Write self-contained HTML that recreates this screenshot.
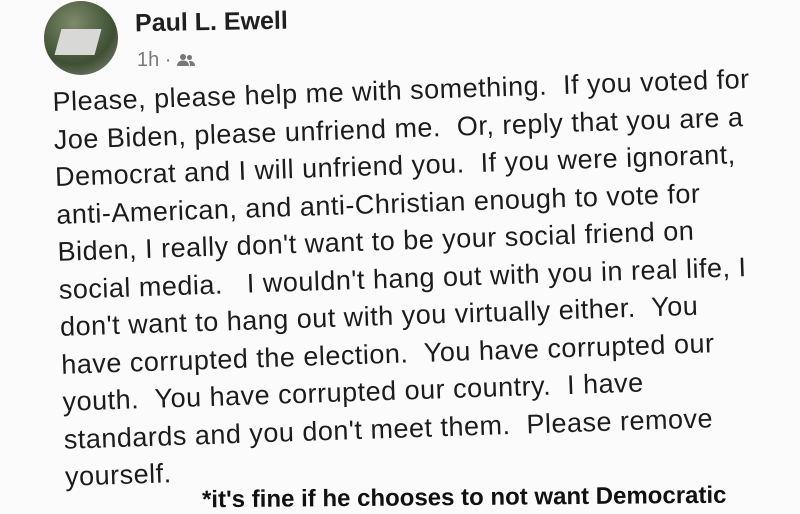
<!DOCTYPE html>
<html><head><meta charset="utf-8"><style>
html,body{margin:0;padding:0;width:800px;height:492px;overflow:hidden;background:#fbfbfb;font-family:"Liberation Sans",Arial,sans-serif;}
.av{position:absolute;left:44px;top:1px;width:74px;height:74px;border-radius:50%;background:radial-gradient(circle at 40% 30%,#7d8b6a,#3e4f33 60%,#8d8f88);overflow:hidden}
.av:after{content:"";position:absolute;left:14px;top:28px;width:40px;height:26px;background:#d8d8d6;transform:skewX(-15deg)}
.name{position:absolute;left:135px;top:8px;font-size:25px;font-weight:bold;color:#1f1f1f;transform:rotate(-1deg)}
.meta{position:absolute;left:137px;top:49px;font-size:20px;color:#7a7a7a}
.body{position:absolute;left:52px;top:84px;font-size:27px;line-height:37.5px;color:#1c1c1c;white-space:pre;transform:rotate(-1.9deg);transform-origin:0 0;letter-spacing:0.5px}
.note{position:absolute;left:202px;top:484px;font-size:24px;font-weight:bold;color:#111;white-space:pre;transform:rotate(-0.5deg)}
</style></head><body>
<div class="av"></div>
<div class="name">Paul L. Ewell</div>
<div class="meta">1h · <svg width="18" height="14" viewBox="0 0 18 14" style="vertical-align:-1px"><circle cx="6" cy="4" r="3" fill="#777"/><circle cx="12.5" cy="4.5" r="2.5" fill="#777"/><path d="M0 13c0-4 3-5.5 6-5.5s6 1.5 6 5.5z" fill="#777"/><path d="M12 8c3 0 6 1 6 5h-5c0-2-0.5-3.5-1-5z" fill="#777"/></svg></div>
<div class="body">Please, please help me with something.  If you voted for
Joe Biden, please unfriend me.  Or, reply that you are a
Democrat and I will unfriend you.  If you were ignorant,
anti-American, and anti-Christian enough to vote for
Biden, I really don't want to be your social friend on
social media.   I wouldn't hang out with you in real life, I
don't want to hang out with you virtually either.  You
have corrupted the election.  You have corrupted our
youth.  You have corrupted our country.  I have
standards and you don't meet them.  Please remove
yourself.</div>
<div class="note">*it's fine if he chooses to not want Democratic</div>
</body></html>
